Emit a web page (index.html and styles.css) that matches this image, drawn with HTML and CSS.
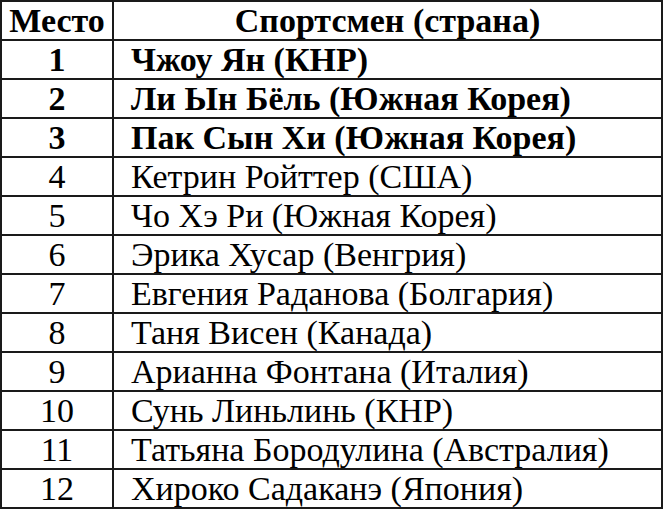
FILE: index.html
```html
<!DOCTYPE html>
<html lang="ru">
<head>
<meta charset="utf-8">
<link rel="stylesheet" href="styles.css">
</head>
<body>
<table class="results">
  <thead>
    <tr><th class="place">Место</th><th class="name">Спортсмен (страна)</th></tr>
  </thead>
  <tbody>
    <tr class="top"><td class="place">1</td><td class="name">Чжоу Ян (КНР)</td></tr>
    <tr class="top"><td class="place">2</td><td class="name">Ли Ын Бёль (Южная Корея)</td></tr>
    <tr class="top"><td class="place">3</td><td class="name">Пак Сын Хи (Южная Корея)</td></tr>
    <tr><td class="place">4</td><td class="name">Кетрин Ройттер (США)</td></tr>
    <tr><td class="place">5</td><td class="name">Чо Хэ Ри (Южная Корея)</td></tr>
    <tr><td class="place">6</td><td class="name">Эрика Хусар (Венгрия)</td></tr>
    <tr><td class="place">7</td><td class="name">Евгения Раданова (Болгария)</td></tr>
    <tr><td class="place">8</td><td class="name">Таня Висен (Канада)</td></tr>
    <tr><td class="place">9</td><td class="name">Арианна Фонтана (Италия)</td></tr>
    <tr><td class="place">10</td><td class="name">Сунь Линьлинь (КНР)</td></tr>
    <tr><td class="place">11</td><td class="name">Татьяна Бородулина (Австралия)</td></tr>
    <tr><td class="place">12</td><td class="name">Хироко Садаканэ (Япония)</td></tr>
  </tbody>
</table>
</body>
</html>
```
FILE: styles.css
```css
html, body {
  margin: 0;
  padding: 0;
  background: #ffffff;
}
.results {
  border-collapse: collapse;
  width: 663px;
  font-family: "Liberation Serif", "Times New Roman", serif;
  font-size: 34px;
  color: #000;
}
.results th, .results td {
  border: 2px solid #1a1a1a;
  height: 37px;
  padding: 0;
  line-height: 37px;
}
.results th {
  font-weight: bold;
  text-align: center;
}
.results .place {
  width: 110px;
  text-align: center;
}
.results td.name {
  padding-left: 17px;
  text-align: left;
}
.results .top td {
  font-weight: bold;
}
```
